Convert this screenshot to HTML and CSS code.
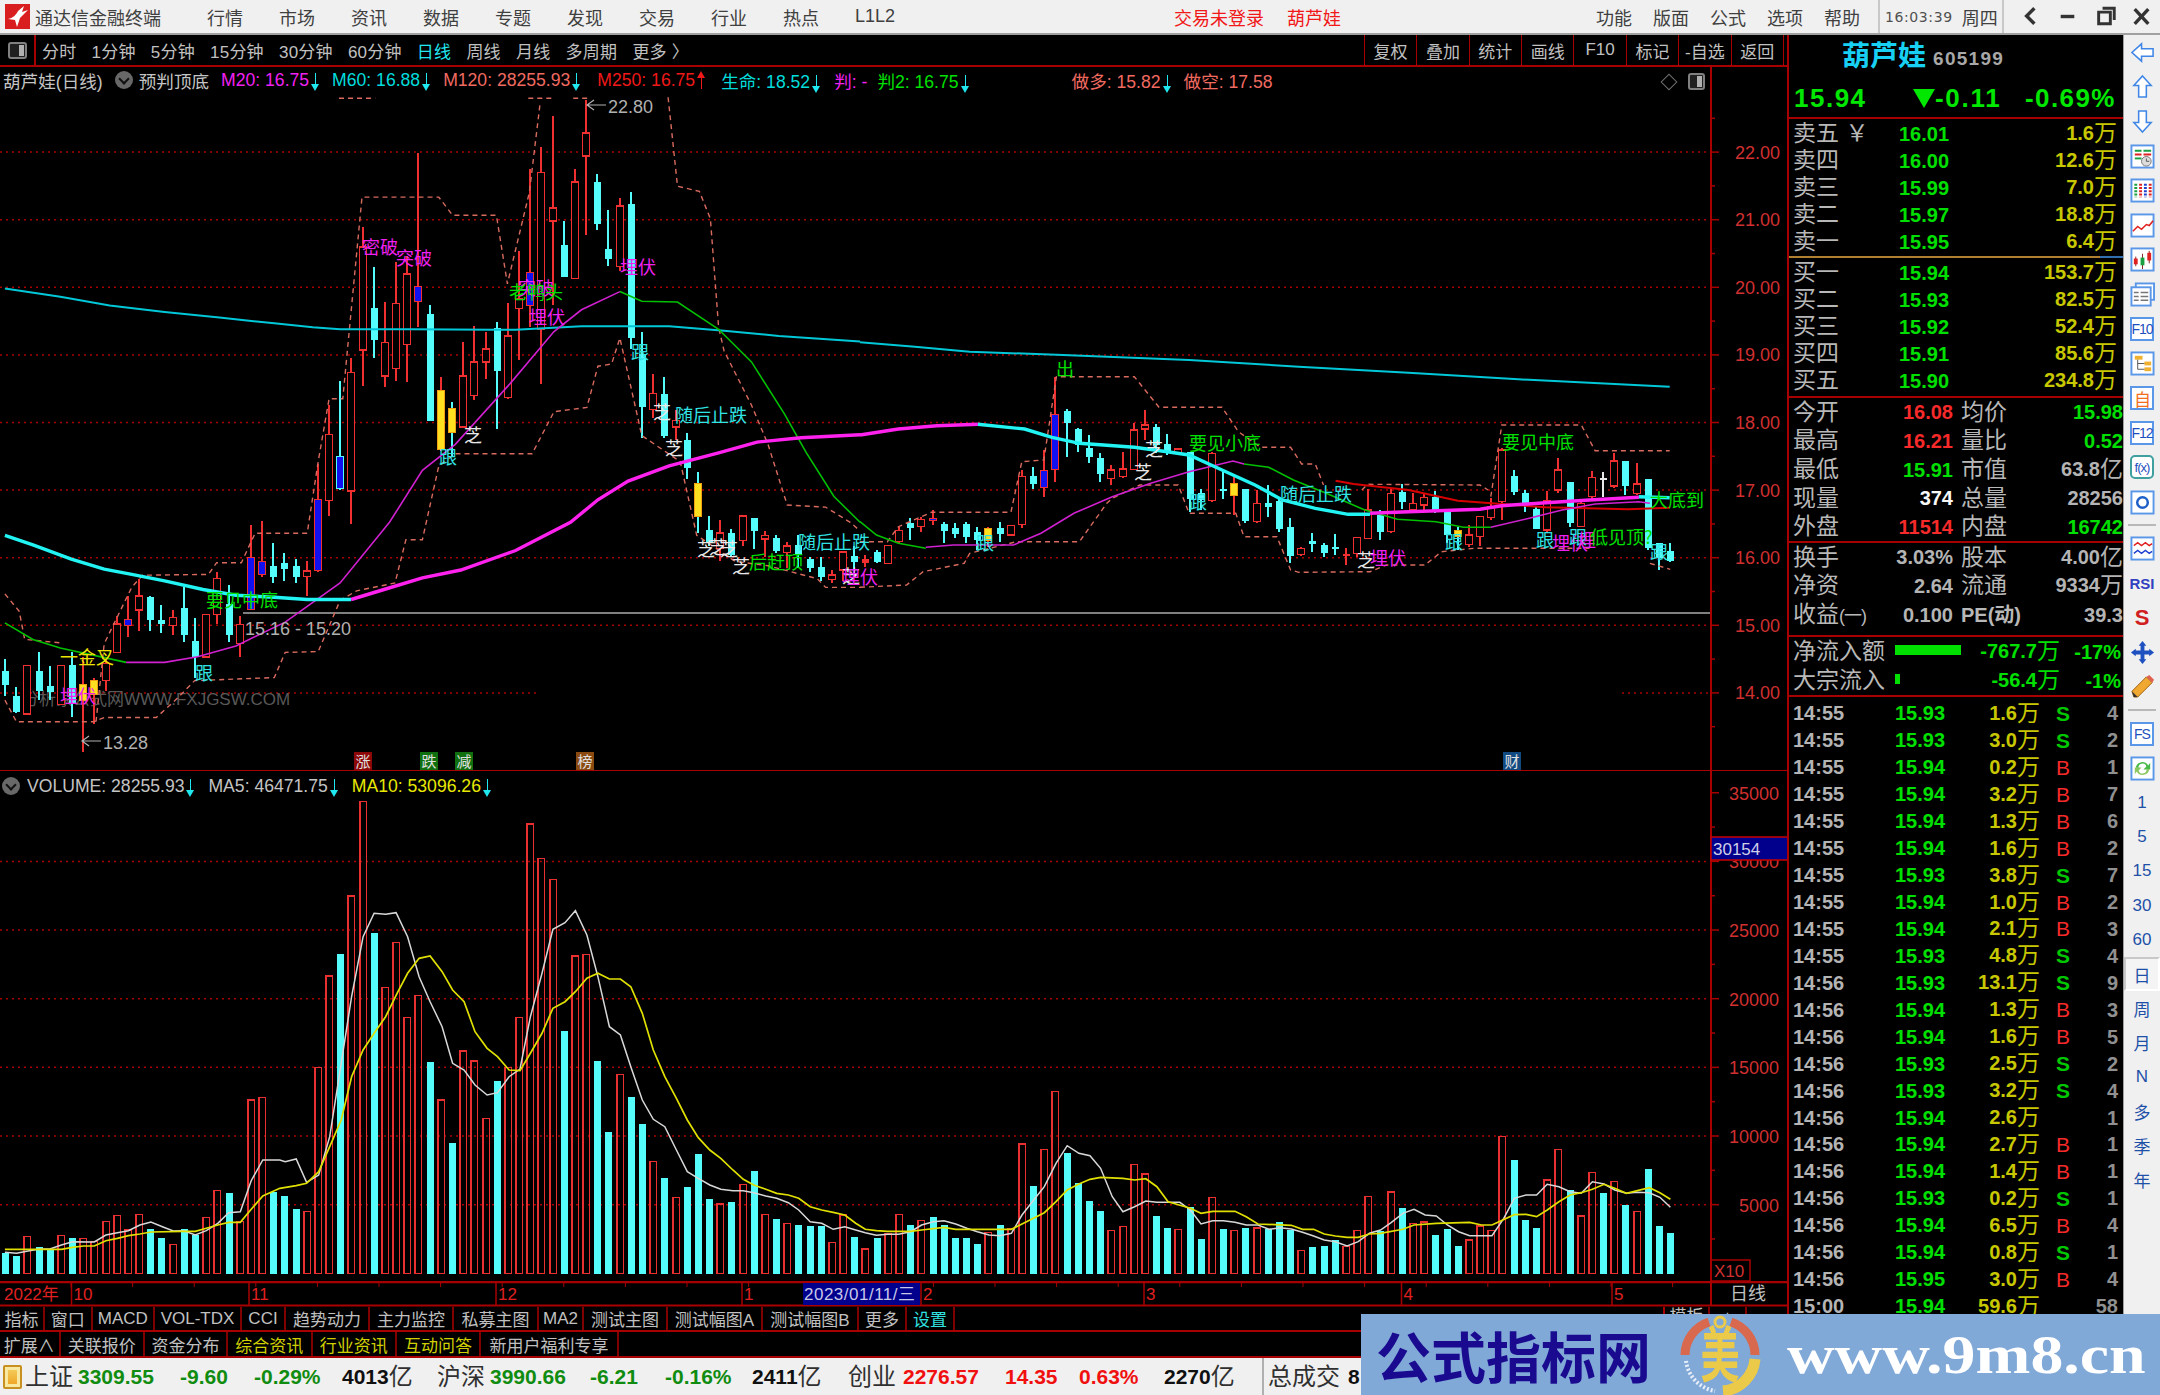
FILE: index.html
```html
<!DOCTYPE html>
<html lang="zh">
<head>
<meta charset="utf-8">
<title>通达信金融终端</title>
<link rel="stylesheet" href="styles.css">
</head>
<body>
<div class="app">
  <header class="titlebar">
    <svg class="logo" viewBox="0 0 25 25"><rect width="25" height="25" fill="#d81e1e"/><path d="M3 15 C8 14 11 11 13 7 L19 2 L17 8 L23 6 L15 14 L12 23 L10 16 Z" fill="#fff"/></svg>
    <span class="appname">通达信金融终端</span>
    <nav class="menu"><span>行情</span><span>市场</span><span>资讯</span><span>数据</span><span>专题</span><span>发现</span><span>交易</span><span>行业</span><span>热点</span><span>L1L2</span></nav>
    <span class="notice first">交易未登录</span><span class="notice second">葫芦娃</span>
    <nav class="menu menu-r"><span>功能</span><span>版面</span><span>公式</span><span>选项</span><span>帮助</span></nav>
    <div class="clock"><span class="time">16:03:39</span><span>周四</span></div>
    <div class="winctl">
      <svg viewBox="0 0 38 33"><path d="M23 8 L15 16 L23 24" fill="none" stroke="#333" stroke-width="3.5"/></svg>
      <svg viewBox="0 0 38 33"><path d="M12 16.5 H26" stroke="#333" stroke-width="3.5"/></svg>
      <svg viewBox="0 0 38 33"><path d="M13 12 H25 V24 H13 Z M17 8 H29 V20" fill="none" stroke="#333" stroke-width="3"/></svg>
      <svg viewBox="0 0 38 33"><path d="M12 9 L26 24 M26 9 L12 24" stroke="#333" stroke-width="3.5"/></svg>
    </div>
  </header>

  <div class="workspace">
    <main class="leftcol">
      <div class="toolbar">
        <div class="tb-icon"><i class="winbtn"></i></div>
        <div class="periods"><span>分时</span><span>1分钟</span><span>5分钟</span><span>15分钟</span><span>30分钟</span><span>60分钟</span><span class="on">日线</span><span>周线</span><span>月线</span><span>多周期</span><span>更多 〉</span></div>
        <div class="tools"><span>复权</span><span>叠加</span><span>统计</span><span>画线</span><span>F10</span><span>标记</span><span>-自选</span><span>返回</span></div>
      </div>
      <section class="panel panel-main">
        <svg id="main" class="chart" viewBox="0 67 1787 704" width="1787" height="704"></svg>
        <div class="legend">
          <span class="t">葫芦娃(日线)</span><i class="chev"></i><span class="t tight">预判顶底</span>
          <span class="mg">M20: 16.75<i class="dn"></i></span>
          <span class="cy">M60: 16.88<i class="dn"></i></span>
          <span class="sa">M120: 28255.93<i class="dn"></i></span>
          <span class="rd sp4">M250: 16.75<i class="up"></i></span>
          <span class="cy sp3">生命: 18.52<i class="dn"></i></span>
          <span class="mg sp1">判: -</span>
          <span class="gr spn">判2: 16.75<i class="dn"></i></span>
          <span class="sa far">做多: 15.82<i class="dn"></i></span>
          <span class="sa">做空: 17.58</span>
        </div>
        <div class="corner"><span class="diamond"></span><i class="winbtn small"></i></div>
      </section>
      <section class="panel panel-vol">
        <svg id="vol" class="chart" viewBox="0 771 1787 510" width="1787" height="510"></svg>
        <div class="legend legend-vol">
          <i class="chev"></i>
          <span class="t">VOLUME: 28255.93<i class="dn"></i></span>
          <span class="t">MA5: 46471.75<i class="dn"></i></span>
          <span class="ye">MA10: 53096.26<i class="dn"></i></span>
        </div>
      </section>
      <svg id="dates" class="chart" viewBox="0 1281 1787 26" width="1787" height="26"></svg>
      <div class="tabs tabs-1">
        <span>指标</span><span>窗口</span><span>MACD</span><span>VOL-TDX</span><span>CCI</span><span>趋势动力</span><span>主力监控</span><span>私募主图</span><span>MA2</span><span>测试主图</span><span>测试幅图A</span><span>测试幅图B</span><span>更多</span><span class="cyan">设置</span><span class="gapcell"></span><span class="mini">模板</span><span class="mini">+</span>
      </div>
      <div class="tabs tabs-2">
        <span>扩展∧</span><span>关联报价</span><span>资金分布</span><span class="yellow">综合资讯</span><span class="yellow">行业资讯</span><span class="yellow">互动问答</span><span>新用户福利专享</span>
      </div>
    </main>

    <aside class="quote">
      <div class="q-head">
        <div class="q-name"><span class="stock">葫芦娃</span><span class="code">605199</span></div>
        <div class="q-price"><span class="now">15.94</span><span class="tri"></span><span class="chg">-0.11</span><span class="pct">-0.69%</span></div>
      </div>
      <div class="book" id="sell"></div>
      <div class="mid"></div>
      <div class="book" id="buy"></div>
      <div class="q-info stats">
        <div class="r5"><b class="l">今开</b><em class="red">16.08</em><b class="l">均价</b><em class="green">15.98</em></div>
        <div class="r5"><b class="l">最高</b><em class="red">16.21</em><b class="l">量比</b><em class="green">0.52</em></div>
        <div class="r5"><b class="l">最低</b><em class="green">15.91</em><b class="l">市值</b><em class="gray">63.8<u>亿</u></em></div>
        <div class="r5"><b class="l">现量</b><em class="white">374</em><b class="l">总量</b><em class="gray">28256</em></div>
        <div class="r5"><b class="l">外盘</b><em class="red">11514</em><b class="l">内盘</b><em class="green">16742</em></div>
      </div>
      <div class="q-info fund">
        <div class="r5"><b class="l">换手</b><em class="gray">3.03%</em><b class="l">股本</b><em class="gray">4.00<u>亿</u></em></div>
        <div class="r5"><b class="l">净资</b><em class="gray">2.64</em><b class="l">流通</b><em class="gray">9334<u>万</u></em></div>
        <div class="r5"><b class="l">收益<i class="sm">(一)</i></b><em class="gray">0.100</em><b class="l pe">PE(动)</b><em class="gray">39.3</em></div>
      </div>
      <div class="flow">
        <div class="f-row"><b class="l">净流入额</b><span class="fbar"><i class="long"></i></span><em class="green">-767.7<u>万</u></em><em class="green">-17%</em></div>
        <div class="f-row"><b class="l">大宗流入</b><span class="fbar"><i class="short"></i></span><em class="green">-56.4<u>万</u></em><em class="green">-1%</em></div>
      </div>
      <div class="trades" id="trades"></div>
    </aside>

    <aside class="sidetools">
      <span class="si"><svg viewBox="0 0 26 26"><path d="M2 13 L12 4 V9 H24 V17 H12 V22 Z" fill="#fff" stroke="#3f86e6" stroke-width="1.6"/></svg></span>
      <span class="si"><svg viewBox="0 0 26 26"><path d="M13 2 L22 12 H17 V24 H9 V12 H4 Z" fill="#fff" stroke="#3f86e6" stroke-width="1.6"/></svg></span>
      <span class="si"><svg viewBox="0 0 26 26"><path d="M13 24 L22 14 H17 V2 H9 V14 H4 Z" fill="#fff" stroke="#3f86e6" stroke-width="1.6"/></svg></span>
      <span class="si"><svg viewBox="0 0 26 26"><rect x="1.5" y="1.5" width="23" height="23" fill="#fff" stroke="#5b97e8" stroke-width="2"/><path d="M5 7H12M14 7H22" stroke="#19a040" stroke-width="2"/><path d="M5 11H12M14 11H22" stroke="#e02020" stroke-width="2"/><path d="M5 15H12" stroke="#19a040" stroke-width="2"/><circle cx="17" cy="18" r="5" fill="#ddd" stroke="#777"/><path d="M17 15V18H20" stroke="#555" fill="none"/></svg></span>
      <span class="si"><svg viewBox="0 0 26 26"><rect x="1.5" y="1.5" width="23" height="23" fill="#fff" stroke="#5b97e8" stroke-width="2"/><path d="M6 6V20" stroke="#19a040" stroke-width="3" stroke-dasharray="2 1.4"/><path d="M11 6V20" stroke="#e02020" stroke-width="3" stroke-dasharray="2 1.4"/><path d="M16 6V20" stroke="#2040d0" stroke-width="3" stroke-dasharray="2 1.4"/><path d="M21 6V20" stroke="#e02020" stroke-width="3" stroke-dasharray="2 1.4"/></svg></span>
      <span class="si"><svg viewBox="0 0 26 26"><rect x="1.5" y="1.5" width="23" height="23" fill="#fff" stroke="#5b97e8" stroke-width="2"/><path d="M3 19 L8 14 L12 17 L17 12 L20 13 L24 8" fill="none" stroke="#e02020" stroke-width="1.6"/></svg></span>
      <span class="si"><svg viewBox="0 0 26 26"><rect x="1.5" y="1.5" width="23" height="23" fill="#fff" stroke="#5b97e8" stroke-width="2"/><path d="M6 10V20M13 7V23M20 4V17" stroke="#802020"/><rect x="4" y="12" width="4" height="6" fill="#e02020"/><rect x="11" y="11" width="4" height="8" fill="#19a040"/><rect x="18" y="6" width="4" height="8" fill="#e02020"/></svg></span>
      <span class="si"><svg viewBox="0 0 26 26"><rect x="6" y="1.5" width="19" height="17" fill="#fff" stroke="#5b97e8" stroke-width="2"/><rect x="1.5" y="5.5" width="20" height="19" fill="#fff" stroke="#5b97e8" stroke-width="2"/><path d="M4 11H9M11 11H19M4 15H9M11 15H19M4 19H9M11 19H19" stroke="#777" stroke-width="1.6"/></svg></span>
      <span class="si"><span class="fk">F10</span></span>
      <span class="si"><svg viewBox="0 0 26 26"><rect x="1.5" y="1.5" width="23" height="23" fill="#fff" stroke="#5b97e8" stroke-width="2"/><rect x="5" y="5" width="8" height="4" fill="#f0b030"/><rect x="15" y="11" width="7" height="4" fill="#f0b030"/><rect x="15" y="17" width="7" height="4" fill="#f0b030"/><path d="M8 9V19H15M8 13H15" fill="none" stroke="#555"/></svg></span>
      <span class="si"><span class="fk zi">自</span></span>
      <span class="si"><span class="fk">F12</span></span>
      <span class="si"><span class="fk fx">f(x)</span></span>
      <span class="si"><svg viewBox="0 0 26 26"><rect x="1.5" y="1.5" width="23" height="23" fill="#fff" stroke="#5b97e8" stroke-width="2"/><circle cx="13" cy="13" r="5.5" fill="none" stroke="#1e60c8" stroke-width="2.6"/></svg></span>
      <span class="sep"></span>
      <span class="si"><svg viewBox="0 0 26 26"><rect x="1.5" y="1.5" width="23" height="23" fill="#fff" stroke="#5b97e8" stroke-width="2"/><path d="M4 10 L8 7 L12 10 L16 7 L20 10 L23 8" fill="none" stroke="#e02020" stroke-width="1.5"/><path d="M4 18 L8 15 L12 18 L16 15 L20 18 L23 16" fill="none" stroke="#2040d0" stroke-width="1.5"/></svg></span>
      <span class="si"><span class="rsi">RSI</span></span>
      <span class="si"><span class="sred">S</span></span>
      <span class="si"><svg viewBox="0 0 26 26"><path d="M13 1 L17 6 H15 V11 H20 V9 L25 13 L20 17 V15 H15 V20 H17 L13 25 L9 20 H11 V15 H6 V17 L1 13 L6 9 V11 H11 V6 H9 Z" fill="#1e50c0"/></svg></span>
      <span class="si"><svg viewBox="0 0 26 26"><path d="M4 24 L2 18 L17 3 L23 9 L8 24 Z" fill="#f0a830" stroke="#a06010"/><path d="M17 3 L20 1 L25 6 L23 9 Z" fill="#e06050"/><path d="M4 24 L2 18 L8 24 Z" fill="#333"/></svg></span>
      <span class="sep"></span>
      <span class="si"><span class="fk">FS</span></span>
      <span class="si"><svg viewBox="0 0 26 26"><rect x="1.5" y="1.5" width="23" height="23" fill="#fff" stroke="#5b97e8" stroke-width="2"/><path d="M6 12 A7 7 0 0 1 19 10 L21 7 V14 H14 L17 11 A4 4 0 0 0 9 13 Z" fill="#48b848"/><path d="M20 14 A7 7 0 0 1 7 16 L5 19 V12 H12 L9 15 A4 4 0 0 0 17 13 Z" fill="#8cc860"/></svg></span>
      <span class="sn">1</span><span class="sn">5</span><span class="sn">15</span><span class="sn">30</span><span class="sn">60</span>
      <span class="sn cur">日</span><span class="sn">周</span><span class="sn">月</span><span class="sn">N</span><span class="sn">多</span><span class="sn">季</span><span class="sn">年</span>
    </aside>
  </div>

  <footer class="status">
    <i class="gold"></i>
    <span class="n">上证</span><b class="up-g">3309.55</b><b class="up-g">-9.60</b><b class="up-g">-0.29%</b><span class="amt">4013<u>亿</u></span>
    <span class="n">沪深</span><b class="up-g">3990.66</b><b class="up-g">-6.21</b><b class="up-g">-0.16%</b><span class="amt">2411<u>亿</u></span>
    <span class="n">创业</span><b class="up-r">2276.57</b><b class="up-r">14.35</b><b class="up-r">0.63%</b><span class="amt">2270<u>亿</u></span>
    <i class="vsep"></i><span class="n">总成交</span><span class="amt">8</span>
  </footer>

  <div class="watermark">
    <span class="wm-cn">公式指标网</span>
    <svg class="wm-logo" viewBox="0 0 82 80">
      <path d="M6 40 A35 35 0 0 1 30 7" fill="none" stroke="#d8694e" stroke-width="9"/>
      <path d="M52 7 A35 35 0 0 1 76 40" fill="none" stroke="#d8694e" stroke-width="9"/>
      <path d="M76 44 A35 35 0 0 1 44 76" fill="none" stroke="#eaca48" stroke-width="11"/>
      <path d="M7 46 A35 35 0 0 0 36 76" fill="none" stroke="#e8eef8" stroke-width="4" stroke-dasharray="2 2"/>
      <text class="wm-glyph" transform="translate(41 62) scale(.85 1.32)" text-anchor="middle">美</text>
      <circle cx="41" cy="7" r="5" fill="none" stroke="#eaca48" stroke-width="3"/>
    </svg>
    <span class="wm-url">www.9m8.cn</span>
  </div>
</div>
<script src="app.js"></script>
</body>
</html>
```
FILE: styles.css
```css
* { box-sizing: border-box; }
html, body { margin: 0; padding: 0; background: #000; }
body { width: 2160px; height: 1395px; overflow: hidden; font-family: "Liberation Sans", "Noto Sans CJK SC", sans-serif; }
i, em, u, b { font-style: normal; text-decoration: none; }
.app { position: relative; width: 2160px; height: 1395px; overflow: hidden; display: flex; flex-direction: column; }

/* title bar */
.titlebar { height: 35px; flex: none; background: #f0f0f0; border-bottom: 2px solid #a0a0a0; display: flex; align-items: center; color: #404040; font-size: 18px; }
.logo { width: 25px; height: 25px; margin-left: 5px; flex: none; }
.appname { margin-left: 5px; width: 126px; white-space: nowrap; }
.menu { display: flex; gap: 36px; margin-left: 46px; align-items: center; }
.menu span { white-space: nowrap; min-width: 36px; }
.notice { color: #f01818; white-space: nowrap; }
.notice.first { margin-left: 279px; }
.notice.second { margin-left: 23px; }
.menu-r { margin-left: auto; gap: 21px; }
.clock { margin-left: 18px; padding-left: 5px; width: 126px; height: 33px; display: flex; align-items: center; gap: 9px; border-left: 2px solid #c8c8c8; border-right: 2px solid #c8c8c8; }
.time { font-family: "DejaVu Sans", sans-serif; font-size: 14px; letter-spacing: .6px; color: #505050; }
.winctl { display: flex; width: 156px; padding-left: 8px; }
.winctl svg { width: 38px; height: 33px; }

/* workspace */
.workspace { flex: none; height: 1323px; display: flex; background: #000; }
.leftcol { width: 1787px; flex: none; display: flex; flex-direction: column; }
.toolbar { height: 32px; flex: none; border-bottom: 2px solid #a80000; display: flex; align-items: center; font-size: 17px; color: #c0c0c0; }
.tb-icon { width: 36px; height: 30px; border-right: 2px solid #a80000; display: flex; align-items: center; justify-content: center; }
.winbtn { display: block; width: 19px; height: 17px; border: 2px solid #808080; border-radius: 3px; position: relative; background: #202020; }
.winbtn::after { content: ""; position: absolute; right: 1px; top: 1px; bottom: 1px; width: 5px; background: #b0b0b0; }
.winbtn.small { width: 17px; height: 17px; }
.periods { display: flex; gap: 15.2px; margin-left: 6px; white-space: nowrap; }
.periods span { letter-spacing: .2px; }
.periods .on { color: #20e8f0; }
.tools { margin-left: auto; margin-right: 3px; display: flex; height: 30px; border-left: 1px solid #a80000; }
.tools span { width: 52.4px; display: flex; align-items: center; justify-content: center; border-right: 1px solid #a80000; white-space: nowrap; }

.panel { position: relative; flex: none; }
.panel-main { height: 704px; }
.panel-vol { height: 510px; }
.chart { display: block; flex: none; }
.legend { position: absolute; left: 3px; top: 1px; height: 24px; display: flex; align-items: center; gap: 12px; font-size: 17.6px; white-space: nowrap; }
.legend-vol { left: 2px; top: 3px; gap: 13px; }
.legend-vol .chev { margin-right: -6px; }
.legend .t { color: #c4c4c4; }
.legend .tight { margin-left: -6px; margin-right: 0; }
.mg { color: #f020f0; } .cy { color: #00dcdc; } .sa { color: #f06a60; } .rd { color: #f01818; } .gr { color: #00e000; } .ye { color: #e8e800; }
.sp4 { margin-left: 4px; } .sp3 { margin-left: 3px; } .sp1 { margin-left: 1px; } .spn { margin-left: -2px; }
.far { margin-left: 90px; }
.chev { display: block; width: 18px; height: 18px; border-radius: 50%; background: #686868; position: relative; }
.chev::after { content: ""; position: absolute; left: 5px; top: 4px; width: 6px; height: 6px; border-right: 2px solid #111; border-bottom: 2px solid #111; transform: rotate(45deg); }
.dn, .up { display: inline-block; position: relative; width: 9px; height: 20px; margin-left: 2px; vertical-align: -5px; }
.dn::before, .up::before { content: ""; position: absolute; left: 4px; top: 2px; bottom: 2px; width: 1px; background: currentColor; }
.dn { color: #20e8f0; } .up { color: #f01818; }
.dn::after { content: ""; position: absolute; left: 0; bottom: 0; border-left: 4.5px solid transparent; border-right: 4.5px solid transparent; border-top: 7px solid #20e8f0; }
.up::after { content: ""; position: absolute; left: 0; top: 0; border-left: 4.5px solid transparent; border-right: 4.5px solid transparent; border-bottom: 7px solid #f01818; }
.corner { position: absolute; left: 1663px; top: 6px; display: flex; align-items: center; gap: 13px; }
.diamond { display: block; width: 12px; height: 12px; border: 1px solid #707070; transform: rotate(45deg); }

.lb { font-size: 18px; font-family: "Noto Sans CJK SC", sans-serif; }
.lb.m { fill: #f020f0; } .lb.g { fill: #00e000; } .lb.c { fill: #30e4e4; } .lb.w { fill: #e8e8e8; } .lb.y { fill: #ece400; }
.axlb { font-size: 18px; fill: #d03030; }
.note { font-size: 18px; fill: #b0b0b0; }
.fxjg { font-size: 17px; fill: #585858; }
.tag { font-size: 15px; fill: #e0e0e0; font-family: "Noto Sans CJK SC", sans-serif; }
.dt { font-size: 17px; fill: #e02020; }
.dtcur { font-size: 17px; fill: #c8c8e8; letter-spacing: .5px; }
.gl { font-size: 18px; fill: #c0c0c0; font-family: "Noto Sans CJK SC", sans-serif; }
.boxtxt { font-size: 17px; fill: #d0d0e8; }
.x10 { font-size: 17px; fill: #d03030; }

/* tabs */
.tabs { flex: none; display: grid; font-size: 17px; color: #c0c0c0; border-bottom: 2px solid #a80000; }
.tabs span { display: flex; align-items: center; justify-content: center; border-right: 2px solid #800000; white-space: nowrap; overflow: hidden; }
.tabs-1 { height: 25px; grid-template-columns: 45px 47.5px 62.5px 87px 44px 84px 84px 85px 45px 84px 95px 96px 48px 48px 710px 45px 37px; border-bottom: 2px solid #a80000; }
.tabs-2 { height: 26px; grid-template-columns: 60.5px 84.5px 83px 84.5px 84.5px 84px 138px; }
.tabs .cyan { color: #30e0e0; } .tabs .yellow { color: #d0d000; }
.tabs .gapcell { border-right: 2px solid #a80000; }
.tabs .mini { align-items: flex-start; line-height: 20px; }

/* quote panel */
.quote { width: 336px; flex: none; border-left: 2px solid #a80000; color: #c0c0c0; display: flex; flex-direction: column; overflow: hidden; line-height: 1; }
.q-head { height: 84px; flex: none; border-bottom: 2px solid #a80000; }
.q-name { height: 44px; display: flex; align-items: center; padding-left: 53px; gap: 7px; }
.stock { font-size: 28px; font-weight: 700; color: #18d0f4; white-space: nowrap; }
.code { font-size: 19px; font-weight: 700; color: #a8a8a8; letter-spacing: 1.3px; padding-top: 2px; }
.q-price { height: 38px; position: relative; display: flex; align-items: center; font-size: 26px; font-weight: 700; color: #00e800; padding-left: 5px; }
.now { width: 119px; letter-spacing: 1.5px; }
.tri { width: 0; height: 0; border-left: 11px solid transparent; border-right: 11px solid transparent; border-top: 19px solid #00e800; }
.chg { width: 90px; letter-spacing: 1.7px; }
.pct { letter-spacing: 1.4px; }
.book { height: 137px; flex: none; padding-left: 4px; }
#sell { padding-top: 1px; }
#buy { padding-top: 1px; }
.book-row { height: 27.1px; display: grid; grid-template-columns: 106px 100px 118px; align-items: center; }
.book-row .l, .l { font-weight: 400; font-size: 23px; color: #b8b8b8; white-space: nowrap; line-height: 1; }
.book-row .p { font-size: 20px; font-weight: 700; color: #00e000; }
.book-row .v { font-size: 20px; font-weight: 700; color: #c8c800; text-align: right; white-space: nowrap; }
u { font-size: 23px; font-weight: 400; line-height: 1; vertical-align: -1px; }
.sm { font-size: 18px; letter-spacing: -1px; }
.mid { height: 2px; flex: none; background: linear-gradient(90deg, #b08030 0 311px, #3070b0 311px); }
.q-info { flex: none; border-top: 2px solid #a80000; padding-left: 4px; }
.stats { margin-top: 1px; height: 145px; }
.fund { height: 94px; }
.r5 { height: 28.65px; display: grid; grid-template-columns: 160px 8px 70px 92px; align-items: center; }
.r5 .l:first-child { grid-column: 1; grid-row: 1; }
.r5 em { font-size: 20px; font-weight: 700; text-align: right; white-space: nowrap; }
.r5 em:nth-child(2) { grid-column: 1; grid-row: 1; }
.r5 .l:nth-child(3) { grid-column: 3; grid-row: 1; }
.r5 em:nth-child(4) { grid-column: 3 / 5; grid-row: 1; }
.pe { font-size: 20px !important; font-weight: 700 !important; }
.red { color: #f62a2a; } .green { color: #00e000; } .gray { color: #b4b4b4; } .white { color: #f8f8f8; }
.flow { flex: none; height: 62px; border-top: 2px solid #a80000; border-bottom: 2px solid #a80000; padding-left: 4px; }
.f-row { position: relative; height: 29px; display: grid; grid-template-columns: 102px 130px 35px 61px; align-items: center; }
.f-row em { font-size: 20px; font-weight: 700; text-align: right; white-space: nowrap; }
.f-row em:nth-of-type(1) { grid-column: 2 / 4; }
.f-row .fbar { display: block; position: absolute; left: 102px; top: 8px; height: 10px; }
.fbar i { display: block; height: 10px; background: #00e000; }
.fbar .long { width: 66px; } .fbar .short { width: 5px; }
.trades { flex: 1; padding: 3px 0 0 4px; overflow: hidden; }
.tr { height: 26.95px; display: grid; grid-template-columns: 102px 80px 65px 46px 32px; align-items: center; font-size: 20px; font-weight: 700; }
.tr .tm { color: #b4b4b4; } .tr .p { color: #00e000; } .tr .v { color: #c8c800; text-align: right; white-space: nowrap; }
.tr .f { text-align: center; font-weight: 400; font-size: 21px; } .tr .n { color: #909090; text-align: right; }
.tr .b { color: #f62a2a; } .tr .s { color: #00c800; font-weight: 700; }

/* side toolbar */
.sidetools { flex: 1; background: #f0f0f0; border-left: 1px solid #a0a0a0; display: flex; flex-direction: column; align-items: center; padding-top: 0; }
.si { height: 34.6px; width: 100%; flex: none; display: flex; align-items: center; justify-content: center; }
.si svg { width: 25px; height: 25px; }
.sep { flex: none; width: 28px; height: 2px; background: #b8b8b8; margin: 5px 0; }
.fk { width: 24px; height: 24px; border: 2px solid #5b97e8; background: #fff; color: #1e50c0; font-size: 14px; display: flex; align-items: center; justify-content: center; letter-spacing: -1px; }
.fk.zi { color: #f07020; font-size: 17px; }
.fk.fx { color: #1e50c0; border-color: #40a0a0; border-radius: 5px; font-size: 13px; }
.rsi { font-size: 15px; font-weight: 700; color: #3040c0; }
.sred { font-size: 22px; font-weight: 700; color: #d02020; }
.sn { flex: none; height: 34.3px; width: 100%; display: flex; align-items: center; justify-content: center; font-size: 17px; color: #1e50a8; }
.sn.cur { border: 2px solid #fff; border-top-color: #c8c8c8; border-left-color: #c8c8c8; background: #f4f4f4; }

/* status bar */
.status { flex: 1; background: #f0f0f0; display: grid; grid-template-columns: 22px 53px 102px 74px 88px 95px 53px 100px 75px 87px 96px 55px 102px 74px 85px 98px 6px 80px 40px; padding-left: 3px; align-items: center; font-size: 24px; color: #303030; line-height: 1; }
.gold { display: block; width: 19px; height: 24px; border: 2px solid #c89020; background: linear-gradient(#f4d060, #f0a020); box-shadow: inset 0 0 0 3px #f8e8a0; border-radius: 2px; }
.status b { font-size: 21px; font-weight: 700; }
.up-g { color: #108c10; } .up-r { color: #f01010; }
.amt { font-size: 21px; font-weight: 700; color: #101010; white-space: nowrap; }
.amt u { font-size: 24px; color: #303030; }
.n { white-space: nowrap; }
.vsep { display: block; width: 2px; height: 37px; background: #b0b0b0; }

/* watermark */
.watermark { position: absolute; left: 1361px; top: 1314px; width: 799px; height: 81px; background: #80a9d8; display: flex; align-items: center; }
.wm-cn { margin-left: 15px; font-size: 55px; font-weight: 700; color: #190a90; white-space: nowrap; font-family: "Noto Sans CJK SC", sans-serif; line-height: 1; width: 275px; }
.wm-logo { width: 82px; height: 80px; margin-left: 28px; flex: none; }
.wm-glyph { font-size: 46px; font-weight: 700; fill: #eaca48; font-family: "Noto Sans CJK SC", sans-serif; }
.wm-url { margin-left: 26px; font-family: "Liberation Serif", serif; font-weight: 700; font-size: 54px; color: #fff; white-space: nowrap; transform: scaleX(1.22); transform-origin: left center; }
```
FILE: app.js
```js
const NS = 'http://www.w3.org/2000/svg';
function add(p, tag, attrs, txt) {
  const e = document.createElementNS(NS, tag);
  for (const k in attrs) e.setAttribute(k, attrs[k]);
  if (txt != null) e.textContent = txt;
  p.appendChild(e);
  return e;
}
const main = document.getElementById('main');
const vol = document.getElementById('vol');
const dates = document.getElementById('dates');
const cx = i => 5 + i * 11.175;
const RED = '#f03030', CY = '#54fcfc', DK = '#a80000';
const z7 = a => a.map(p => [p[0] / 1.823, 80 + p[1] / 2.306]);
const z8 = a => a.map(p => [860 + p[0] / 1.823, 330 + p[1] / 3]);
const z9 = a => a.map(p => [p[0] / 1.823, 770 + p[1] / 3]);
const z10 = a => a.map(p => [860 + p[0] / 1.704, 770 + p[1] / 3]);
function line(svg, pts, stroke, w, dash) {
  const a = { points: pts.map(p => p[0].toFixed(1) + ',' + p[1].toFixed(1)).join(' '), fill: 'none', stroke: stroke, 'stroke-width': w };
  if (dash) a['stroke-dasharray'] = dash;
  add(svg, 'polyline', a);
}

/* main grid */
const py = p => 557.7 - (p - 16) * 67.6;
[22, 21, 20, 19, 18, 17, 16, 15].forEach(p => add(main, 'line', { x1: 0, x2: 1711, y1: py(p), y2: py(p), stroke: DK, 'stroke-width': 1.5, 'stroke-dasharray': '2 4' }));
add(main, 'line', { x1: 0, x2: 537, y1: py(14), y2: py(14), stroke: DK, 'stroke-width': 1.5, 'stroke-dasharray': '2 4' });
add(main, 'line', { x1: 1622, x2: 1711, y1: py(14), y2: py(14), stroke: DK, 'stroke-width': 1.5, 'stroke-dasharray': '2 4' });
add(main, 'line', { x1: 243, x2: 1711, y1: 613, y2: 613, stroke: '#808080', 'stroke-width': 2 });
add(main, 'text', { class: 'fxjg', x: 22, y: 705 }, '分析家公式网WWW.FXJGSW.COM');

/* candles: type, wickTop, bodyTop, bodyBot, wickBot (r red, c cyan, b blue, y yellow+red wick, Y yellow+cyan wick, w white) */
const c7 = `c 1335 1362 1395 1420;c 1400 1420 1458 1460;r 1350 1350 1462 1462;c 1318 1362 1408 1430;c 1352 1397 1412 1430;r 1350 1350 1440 1440;c 1320 1350 1440 1470;y 1330 1395 1430 1550;y 1380 1385 1418 1485;r 1330 1345 1385 1410;r 1235 1255 1320 1320;b 1190 1243 1257 1285;r 1150 1190 1222 1270;c 1190 1193 1245 1270;c 1210 1245 1255 1275;r 1222 1240 1258 1280;c 1170 1217 1280 1295;c 1240 1293 1330 1380;r 1232 1232 1330 1330;r 1135 1150 1232 1255;c 1165 1208 1280 1295;r 1235 1256 1300 1330;b 1027 1102 1220 1222;b 1018 1110 1140 1145;c 1068 1120 1147 1160;c 1090 1114 1128 1155;c 1105 1120 1147 1160;r 1110 1132 1145 1190;b 885 968 1130 1135;r 750 817 970 1005;u 695 868 942 945;r 640 675 948 1025;r 340 385 623 705;c 432 525 600 640;r 512 605 682 708;r 420 515 665 695;r 405 447 610 697;b 168 477 510 570;c 518 540 787 787;y 685 715 852 855;Y 742 757 813 870;r 605 682 800 800;r 568 650 728 738;r 580 620 650 690;c 558 573 672 805;r 515 590 732 735;r 395 505 527 645;b 205 445 520 570;r 155 213 575 700;r 82 295 325 520;c 325 380 455 455;r 205 235 458 460;r 45 122 175 358;c 217 235 332 345;c 300 390 413 430;r 272 290 430 440;c 258 287 594 620;c 580 632 755 825;r 678 723 760 780;c 685 723 820 825;r 760 785 800 830;c 815 830 895 920;Y 905 930 1007 1045;c 1005 1037 1065 1075;r 1015 1045 1080 1110;c 1035 1045 1095 1100;r 1005 1005 1062 1075;c 1010 1010 1040 1082;r 1040 1050 1058 1100;c 1050 1055 1085 1090;r 1065 1075 1090 1125;c 1050 1072 1095 1125;c 1100 1105 1125 1135;c 1100 1122 1147 1155;r 1130 1142 1152 1160;r 1085 1088 1130 1155;c 1075 1098 1112 1145`.split(';');
const c8 = `R 675 688 698 710;c 660 667 695 700;r 647 647 700 700;r 590 602 635 640;c 565 580 595 630;r 560 568 590 605;b 540 565 570 585;c 575 582 602 640;c 580 595 612 625;c 575 582 620 640;c 590 605 630 660;y 590 595 630 650;c 575 595 612 635;r 587 587 615 615;r 420 440 583 595;c 410 437 463 478;b 360 420 472 500;b 140 253 417 455;c 238 243 278 382;c 295 297 345 367;c 315 355 382 400;c 368 383 431 455;r 405 420 445 465;r 365 417 440 445;r 280 300 418 420;r 240 285 297 330;c 282 290 345 370;c 312 343 367 375;r 355 357 369 375;c 365 365 508 545;c 478 490 510 540;r 365 370 512 515;c 425 478 482 508;y 440 460 495 555;c 478 478 573 580;r 480 520 575 578;c 465 520 530 560;c 505 513 598 605;c 563 590 678 700;r 650 655 673 677;c 608 632 642 665;c 640 645 670 680;c 613 650 657 675;R 655 672 678 705;r 622 622 670 680;r 478 540 625 628;c 540 555 605 630;r 478 490 605 610;c 462 485 517 538;r 490 520 538 540;r 490 502 525 540;c 482 500 545 548;c 540 543 615 640;Y 590 600 620 660;r 585 615 643 650;r 558 560 620 648;r 505 530 562 570;r 355 360 515 570;c 420 437 487 495;c 480 490 520 545;c 530 537 597 598;r 483 512 600 605;r 383 420 480 490;c 455 455 580 590;r 510 520 590 590;r 422 442 500 510;w 425 445 450 500;r 370 393 468 475;c 392 392 468 495;r 400 462 490 495;c 447 447 655 660;c 640 640 685 720;c 640 663 693 695`.split(';');
const conv7 = v => 80 + v / 2.306, conv8 = v => 330 + v / 3;
function candle(i, s, conv) {
  const p = s.split(' ');
  const t = p[0], wt = conv(+p[1]), bt = conv(+p[2]), bb = conv(+p[3]), wb = conv(+p[4]);
  const x = cx(i), xr = Math.round(x), w = 7;
  const col = { r: RED, R: RED, c: CY, b: RED, u: CY, y: RED, Y: CY, w: '#e8e8e8' }[t];
  add(main, 'line', { x1: xr, x2: xr, y1: wt, y2: wb, stroke: col, 'stroke-width': 1.5, 'shape-rendering': 'crispEdges' });
  const attrs = { x: xr - w / 2, y: bt, width: w, height: Math.max(bb - bt, 1.5), 'shape-rendering': 'crispEdges' };
  if (t === 'r') Object.assign(attrs, { fill: '#000', stroke: RED, 'stroke-width': 1.5 });
  else if (t === 'R') Object.assign(attrs, { fill: RED });
  else if (t === 'c') Object.assign(attrs, { fill: CY });
  else if (t === 'w') Object.assign(attrs, { fill: '#e8e8e8' });
  else if (t === 'b') Object.assign(attrs, { fill: '#1010f0', stroke: RED, 'stroke-width': 1 });
  else if (t === 'u') Object.assign(attrs, { fill: '#1010f0', stroke: CY, 'stroke-width': 1 });
  else Object.assign(attrs, { fill: '#ffe020', stroke: '#f0a010', 'stroke-width': 1 });
  add(main, 'rect', attrs);
}
c7.forEach((s, i) => candle(i, s, conv7));
c8.forEach((s, i) => candle(i + 77, s, conv8));

/* stop-loss dashes */
const DS = '#d86a5e';
const dash = (pts) => line(main, pts, DS, 1.4, '5 4');
dash(z7([[9, 1185], [35, 1225], [45, 1290], [110, 1298]]));
dash(z7([[9, 1430], [30, 1480], [170, 1480], [190, 1470], [285, 1470], [320, 1430], [355, 1385], [500, 1378], [520, 1320], [580, 1318], [620, 1200], [650, 1178], [720, 1160], [740, 1060], [770, 1060], [800, 890], [830, 862], [970, 862], [1010, 765], [1070, 755], [1090, 660], [1115, 655], [1130, 595], [1170, 820], [1240, 880], [1270, 1050], [1340, 1110], [1400, 1120], [1490, 1150], [1505, 1170], [1568, 1170]]));
dash(z7([[175, 1480], [190, 1300], [240, 1170], [260, 1142], [380, 1140], [395, 1113], [440, 1113], [465, 1045], [560, 1045], [580, 880], [600, 735], [625, 735], [660, 270], [800, 270], [825, 312], [905, 312], [925, 470], [965, 260], [985, 50]]));
dash(z7([[618, 42], [684, 42]])); dash(z7([[963, 42], [1008, 42]])); dash(z7([[1045, 42], [1075, 42]]));
dash(z7([[1218, 40], [1235, 245], [1275, 257], [1295, 320], [1310, 570], [1320, 625], [1370, 750], [1400, 840], [1435, 980], [1505, 985], [1550, 1020], [1568, 1040]]));
dash(z8([[0, 772], [85, 765], [115, 725], [190, 700], [200, 670], [285, 635], [400, 635], [450, 520], [460, 505], [510, 465], [580, 465], [600, 550], [685, 550], [700, 620], [760, 620], [785, 720], [800, 727], [930, 725], [960, 705], [1030, 705], [1060, 665], [1120, 655], [1250, 655], [1330, 655]]));
dash(z8([[1440, 700], [1477, 718]]));
dash(z8([[0, 635], [50, 635], [70, 590], [130, 547], [275, 547], [295, 395], [335, 390], [358, 140], [500, 140], [545, 232], [660, 232], [690, 305], [730, 352], [785, 352], [805, 402], [830, 402], [845, 465]]));
dash(z8([[915, 480], [925, 463], [1130, 465], [1145, 480]]));
dash(z8([[1150, 500], [1170, 285], [1315, 285], [1340, 362], [1476, 362]]));

/* averages */
line(main, z8([[867, 452], [900, 462], [1000, 480], [1090, 512], [1170, 522], [1250, 532], [1400, 538], [1476, 533]]), '#d80000', 2);
const LC = '#00c8d8', TC = '#22f4f4', TM = '#ff22ee', SM = '#d020d0', SG = '#00c000';
line(main, z7([[9, 481], [110, 500], [200, 520], [300, 535], [400, 548], [500, 561], [570, 570], [620, 575], [750, 575], [900, 576], [940, 576], [1060, 568], [1220, 568], [1320, 578], [1420, 590], [1568, 603]]), LC, 2);
line(main, z8([[0, 37], [100, 50], [200, 65], [370, 75], [600, 90], [800, 110], [1000, 128], [1200, 148], [1476, 170]]), LC, 2);
line(main, z7([[9, 1252], [60, 1290], [110, 1310], [230, 1343]]), SG, 1.6);
line(main, z7([[230, 1343], [300, 1343], [360, 1330], [430, 1305], [520, 1250], [620, 1160], [710, 1020], [770, 900], [830, 840], [930, 700], [1010, 580], [1060, 530], [1130, 488]]), SM, 1.6);
line(main, z7([[1130, 488], [1170, 510], [1235, 512], [1310, 575], [1370, 650], [1430, 770], [1470, 860], [1520, 960], [1568, 1020]]), SG, 1.6);
line(main, z8([[0, 575], [30, 615], [70, 640], [120, 655]]), SG, 1.6);
line(main, z8([[120, 652], [170, 645], [280, 645], [330, 610], [390, 550], [460, 500], [530, 460], [600, 425], [680, 393], [700, 402]]), SM, 1.6);
line(main, z8([[700, 402], [745, 412], [790, 450], [850, 490], [920, 540], [980, 568], [1050, 575], [1100, 592], [1150, 592]]), SG, 1.6);
line(main, z8([[1150, 592], [1220, 565], [1280, 540], [1340, 522], [1420, 515], [1440, 520]]), SM, 1.6);
line(main, z7([[9, 1050], [60, 1072], [130, 1105], [190, 1128], [240, 1140], [300, 1155], [370, 1175], [430, 1188], [500, 1193], [560, 1198], [640, 1198]]), TC, 3.4);
line(main, z7([[640, 1198], [700, 1175], [770, 1148], [840, 1130], [940, 1085], [1040, 1020], [1090, 968], [1145, 925], [1220, 890], [1310, 860], [1380, 835], [1460, 825], [1568, 818]]), TM, 3.4);
line(main, z8([[0, 315], [70, 297], [140, 287], [215, 283]]), TM, 3.4);
line(main, z8([[215, 283], [300, 297], [350, 322], [400, 340], [500, 352], [560, 365], [600, 375], [660, 420], [720, 465], [770, 510], [830, 535], [890, 553], [930, 553]]), TC, 3.4);
line(main, z8([[930, 550], [1000, 545], [1130, 538], [1170, 527], [1250, 518], [1330, 510], [1420, 502]]), TM, 3.4);
line(main, z8([[1420, 500], [1476, 503]]), TC, 3.4);

/* signal labels: text, x, centre y, colour */
[['跟', 195, 673, 'c'], ['一金叉', 60, 657, 'y'], ['埋伏', 60, 696, 'm'], ['要见中底', 206, 600, 'g'], ['密破', 362, 247, 'm'], ['突破', 396, 258, 'm'], ['突破', 518, 288, 'm'], ['老鸭头', 509, 292, 'g'], ['埋伏', 529, 317, 'm'], ['埋伏', 620, 267, 'm'], ['跟', 631, 352, 'c'], ['跟', 439, 457, 'c'], ['芝', 464, 435, 'w'], ['芝', 653, 412, 'w'], ['随后止跌', 675, 415, 'c'], ['芝', 665, 448, 'w'], ['芝', 697, 549, 'w'], ['芝', 709, 547, 'w'], ['芝', 720, 549, 'w'], ['芝', 732, 566, 'w'], ['后赶顶', 749, 562, 'g'], ['随后止跌', 798, 542, 'c'], ['芝', 842, 576, 'w'], ['埋伏', 842, 577, 'm'], ['出', 1056, 369, 'g'], ['要见小底', 1189, 443, 'g'], ['芝', 1145, 449, 'w'], ['芝', 1134, 472, 'w'], ['跟', 1189, 502, 'c'], ['跟', 976, 543, 'c'], ['随后止跌', 1280, 494, 'c'], ['芝', 1357, 560, 'w'], ['埋伏', 1370, 558, 'm'], ['跟', 1445, 542, 'c'], ['要见中底', 1502, 442, 'g'], ['跟', 1536, 540, 'c'], ['埋伏', 1552, 543, 'm'], ['跟', 1569, 537, 'c'], ['埋', 1578, 540, 'm'], ['低见顶?', 1590, 537, 'g'], ['大底到', 1650, 500, 'g'], ['跟', 1650, 552, 'c']].forEach(l => add(main, 'text', { class: 'lb ' + l[3], x: l[1], y: l[2] + 6.5 }, l[0]));
add(main, 'text', { class: 'note', x: 245, y: 635 }, '15.16 - 15.20');
add(main, 'text', { class: 'note', x: 608, y: 113 }, '22.80');
add(main, 'path', { d: 'M606 105 H588 M594 100 L587 105 L594 110', stroke: '#b0b0b0', fill: 'none', 'stroke-width': 1.2 });
add(main, 'text', { class: 'note', x: 103, y: 749 }, '13.28');
add(main, 'path', { d: 'M101 741 H83 M89 736 L82 741 L89 746', stroke: '#b0b0b0', fill: 'none', 'stroke-width': 1.2 });
[['涨', 354, '#8c0808'], ['跌', 420, '#107010'], ['减', 455, '#107010'], ['榜', 576, '#8a4a10'], ['财', 1503, '#104a80']].forEach(t => {
  add(main, 'rect', { x: t[1], y: 752, width: 18, height: 19, fill: t[2] });
  add(main, 'text', { class: 'tag', x: t[1] + 1.5, y: 767 }, t[0]);
});

/* main axis */
add(main, 'line', { x1: 1711, x2: 1711, y1: 67, y2: 771, stroke: DK, 'stroke-width': 2 });
[22, 21, 20, 19, 18, 17, 16, 15, 14].forEach(p => add(main, 'text', { class: 'axlb', x: 1780, y: py(p) + 6.5, 'text-anchor': 'end' }, p + '.00'));
for (let p = 13.5; p < 23; p += 0.5) {
  add(main, 'line', { x1: 1711, x2: p % 1 ? 1715 : 1719, y1: py(p), y2: py(p), stroke: DK, 'stroke-width': 1.5 });
}
add(main, 'line', { x1: 0, x2: 1787, y1: 771, y2: 771, stroke: DK, 'stroke-width': 2 });

/* volume */
const vy = v => 1273.3 - v * 0.01373;
[30000, 25000, 20000, 15000, 10000, 5000].forEach(v => add(vol, 'line', { x1: 0, x2: 1711, y1: vy(v), y2: vy(v), stroke: DK, 'stroke-width': 1.5, 'stroke-dasharray': '2 4' }));
const bars9 = 'c1450 c1458 r1400 c1432 c1438 r1396 c1405 r1405 r1415 r1355 r1337 r1380 r1333 c1378 c1405 r1423 c1378 c1395 r1342 r1262 c1270 r1355 r990 r982 c1265 c1278 c1318 r1324 r892 r618 c553 r378 r95 c490 r653 r518 r743 r677 c877 r990 c1120 r843 r873 r1045 c932 r892 r743 r162 r265 r328 c783 r558 r553 c873 c1085 r913 c980 c1062 r1175 c1224 r1283 c1252 c1152 c1287 r1302 c1296 r1243 c1202 r1333 c1346 r1360 c1364 c1368 c1368 r1418 r1335 c1400 r1437 c1404 r1390 r1333 c1364 r1352 c1342 c1365 c1405 c1405 c1422 r1388 c1364 r1375 r1122 c1247 r1139 r965 c1148 c1240 c1292 c1323 r1382 r1370 r1184 r1212 c1337 c1373 r1378 c1310 c1408 r1283 c1378 r1382 c1373 r1374 c1378 c1355 c1380 r1442 c1432 c1427 c1410 r1430 r1382 r1280 c1382 r1266 c1315 r1360 r1356 c1394 c1378 c1427 r1410 r1368 r1382 r1100 c1170 c1350 c1373 r1230 r1139 c1260 r1338 r1208 c1268 r1235 c1305 r1325 c1197 c1368 c1390'.split(' ');
bars9.forEach((s, i) => {
  const top = 770 + (+s.slice(1)) / 3, x = Math.round(cx(i)) - 3.5, h = 1273.5 - top;
  if (s[0] === 'r') add(vol, 'rect', { x: x + .5, y: top, width: 6.5, height: h, fill: 'none', stroke: '#e83030', 'stroke-width': 1.5, 'shape-rendering': 'crispEdges' });
  else add(vol, 'rect', { x: x, y: top, width: 7, height: h, fill: CY, 'shape-rendering': 'crispEdges' });
});
const ma5 = z9([[9, 1447], [30, 1450], [51, 1443], [72, 1437], [91, 1437], [112, 1425], [132, 1415], [172, 1416], [193, 1395], [214, 1388], [234, 1382], [255, 1365], [275, 1356], [296, 1370], [316, 1383], [335, 1382], [356, 1395], [376, 1382], [397, 1360], [417, 1328], [438, 1325], [458, 1232], [479, 1170], [510, 1170], [520, 1175], [540, 1167], [559, 1237], [581, 1215], [601, 1100], [622, 880], [641, 680], [662, 500], [682, 430], [703, 433], [722, 428], [743, 500], [764, 620], [784, 695], [806, 770], [825, 880], [846, 900], [866, 945], [888, 975], [907, 968], [928, 920], [948, 897], [967, 740], [988, 610], [1008, 478], [1030, 458], [1049, 422], [1070, 495], [1090, 620], [1111, 770], [1131, 795], [1150, 890], [1171, 990], [1191, 1048], [1212, 1070], [1233, 1140], [1253, 1205], [1273, 1225], [1294, 1245], [1314, 1258], [1336, 1262], [1355, 1262], [1374, 1268], [1396, 1278], [1416, 1285], [1437, 1298], [1456, 1320], [1477, 1355], [1498, 1360], [1519, 1378], [1540, 1370], [1560, 1380]]).concat(z10([[9, 1388], [28, 1396], [47, 1393], [66, 1393], [86, 1385], [105, 1365], [125, 1355], [143, 1352], [163, 1362], [182, 1375], [200, 1385], [220, 1395], [238, 1397], [258, 1390], [276, 1335], [296, 1290], [314, 1250], [334, 1180], [353, 1127], [373, 1150], [392, 1157], [410, 1195], [430, 1280], [448, 1325], [468, 1310], [487, 1293], [506, 1297], [545, 1297], [563, 1320], [581, 1362], [601, 1352], [619, 1352], [639, 1357], [658, 1365], [678, 1365], [697, 1378], [716, 1373], [735, 1377], [754, 1387], [773, 1398], [791, 1410], [810, 1415], [830, 1428], [849, 1415], [868, 1390], [887, 1380], [905, 1358], [925, 1330], [944, 1318], [963, 1335], [982, 1338], [1001, 1365], [1020, 1385], [1039, 1397], [1077, 1397], [1097, 1345], [1115, 1285], [1135, 1275], [1153, 1275], [1171, 1243], [1191, 1250], [1210, 1265], [1229, 1270], [1248, 1235], [1268, 1242], [1286, 1260], [1306, 1270], [1324, 1267], [1345, 1268], [1363, 1282], [1381, 1312]]));
const ma10 = z9([[9, 1438], [112, 1438], [132, 1432], [152, 1428], [172, 1428], [193, 1412], [214, 1405], [234, 1397], [255, 1392], [275, 1386], [335, 1384], [356, 1384], [376, 1375], [397, 1365], [417, 1357], [438, 1357], [458, 1318], [479, 1278], [510, 1255], [540, 1247], [559, 1240], [581, 1205], [601, 1130], [622, 1050], [641, 920], [662, 840], [682, 790], [703, 740], [724, 670], [743, 610], [764, 565], [784, 558], [806, 605], [825, 660], [846, 695], [866, 785], [888, 835], [907, 860], [928, 900], [948, 902], [967, 850], [988, 790], [1008, 715], [1030, 695], [1049, 665], [1070, 625], [1090, 610], [1111, 627], [1131, 627], [1150, 650], [1171, 730], [1191, 840], [1212, 920], [1233, 985], [1253, 1050], [1273, 1103], [1294, 1140], [1314, 1165], [1336, 1200], [1355, 1228], [1374, 1245], [1396, 1258], [1416, 1270], [1437, 1275], [1456, 1285], [1477, 1310], [1498, 1320], [1519, 1327], [1540, 1335], [1560, 1360]]).concat(z10([[9, 1378], [28, 1382], [47, 1384], [86, 1384], [105, 1380], [143, 1372], [163, 1378], [182, 1378], [238, 1378], [258, 1378], [276, 1362], [314, 1328], [334, 1295], [353, 1260], [373, 1242], [392, 1228], [410, 1222], [448, 1225], [468, 1230], [487, 1226], [506, 1250], [525, 1295], [563, 1315], [581, 1330], [601, 1324], [639, 1324], [658, 1340], [678, 1362], [735, 1366], [754, 1378], [773, 1378], [791, 1392], [810, 1398], [830, 1402], [849, 1402], [868, 1392], [887, 1390], [925, 1378], [944, 1365], [982, 1360], [1039, 1357], [1059, 1365], [1077, 1365], [1115, 1334], [1135, 1333], [1153, 1340], [1171, 1320], [1191, 1295], [1210, 1275], [1229, 1268], [1248, 1258], [1268, 1243], [1286, 1255], [1306, 1270], [1345, 1253], [1363, 1268], [1381, 1288]]));
line(vol, ma5, '#d8d8d8', 1.5);
line(vol, ma10, '#e0e000', 1.7);
add(vol, 'line', { x1: 1711, x2: 1711, y1: 771, y2: 1281, stroke: DK, 'stroke-width': 2 });
[35000, 30000, 25000, 20000, 15000, 10000, 5000].forEach(v => {
  add(vol, 'text', { class: 'axlb', x: 1779, y: vy(v) + 7, 'text-anchor': 'end' }, v);
});
for (let v = 2500; v <= 37500; v += 2500) add(vol, 'line', { x1: 1711, x2: v % 5000 ? 1715 : 1719, y1: vy(v), y2: vy(v), stroke: DK, 'stroke-width': 1.5 });
add(vol, 'rect', { x: 1711, y: 837, width: 77, height: 23, fill: '#00008c', stroke: '#c80000', 'stroke-width': 1.5 });
add(vol, 'text', { class: 'boxtxt', x: 1713, y: 854.5 }, '30154');
add(vol, 'rect', { x: 1711, y: 1260, width: 39, height: 21, fill: 'none', stroke: DK, 'stroke-width': 1.5 });
add(vol, 'text', { class: 'x10', x: 1714, y: 1277 }, 'X10');

/* date axis */
add(dates, 'line', { x1: 0, x2: 1787, y1: 1282, y2: 1282, stroke: DK, 'stroke-width': 2.5 });
add(dates, 'line', { x1: 0, x2: 1787, y1: 1305.5, y2: 1305.5, stroke: DK, 'stroke-width': 2 });
for (let x = 71; x < 1700; x += 61.6) add(dates, 'line', { x1: x, x2: x, y1: 1283, y2: 1287, stroke: DK });
add(dates, 'text', { class: 'dt', x: 4, y: 1300 }, '2022年');
[[71.5, '10'], [249, '11'], [496, '12'], [742, '1'], [921, '2'], [1144, '3'], [1401.5, '4'], [1612, '5']].forEach(m => {
  add(dates, 'line', { x1: m[0], x2: m[0], y1: 1283, y2: 1305, stroke: DK, 'stroke-width': 1.5 });
  add(dates, 'text', { class: 'dt', x: m[0] + 2, y: 1300 }, m[1]);
});
add(dates, 'rect', { x: 803, y: 1283, width: 117, height: 22, fill: '#00008c' });
add(dates, 'text', { class: 'dtcur', x: 804, y: 1300 }, '2023/01/11/三');
add(dates, 'line', { x1: 1711, x2: 1711, y1: 1281, y2: 1306, stroke: DK, 'stroke-width': 2 });
add(dates, 'text', { class: 'gl', x: 1730, y: 1300 }, '日线');

/* quote rows */
const sell = document.getElementById('sell'), buy = document.getElementById('buy');
const book = (el, rows) => rows.forEach(r => {
  el.insertAdjacentHTML('beforeend', `<div class="book-row"><b class="l">${r[0]}</b><span class="p">${r[1]}</span><span class="v">${r[2]}<u>万</u></span></div>`);
});
book(sell, [['卖五 ￥', '16.01', '1.6'], ['卖四', '16.00', '12.6'], ['卖三', '15.99', '7.0'], ['卖二', '15.97', '18.8'], ['卖一', '15.95', '6.4']]);
book(buy, [['买一', '15.94', '153.7'], ['买二', '15.93', '82.5'], ['买三', '15.92', '52.4'], ['买四', '15.91', '85.6'], ['买五', '15.90', '234.8']]);
const tr = `14:55 15.93 1.6 S 4;14:55 15.93 3.0 S 2;14:55 15.94 0.2 B 1;14:55 15.94 3.2 B 7;14:55 15.94 1.3 B 6;14:55 15.94 1.6 B 2;14:55 15.93 3.8 S 7;14:55 15.94 1.0 B 2;14:55 15.94 2.1 B 3;14:55 15.93 4.8 S 4;14:56 15.93 13.1 S 9;14:56 15.94 1.3 B 3;14:56 15.94 1.6 B 5;14:56 15.93 2.5 S 2;14:56 15.93 3.2 S 4;14:56 15.94 2.6 - 1;14:56 15.94 2.7 B 1;14:56 15.94 1.4 B 1;14:56 15.93 0.2 S 1;14:56 15.94 6.5 B 4;14:56 15.94 0.8 S 1;14:56 15.95 3.0 B 4;15:00 15.94 59.6 - 58`.split(';');
const tg = document.getElementById('trades');
tr.forEach(l => {
  const p = l.split(' ');
  const f = p[3] === '-' ? '' : p[3];
  tg.insertAdjacentHTML('beforeend', `<div class="tr"><span class="tm">${p[0]}</span><span class="p">${p[1]}</span><span class="v">${p[2]}<u>万</u></span><span class="f ${f.toLowerCase()}">${f}</span><span class="n">${p[4]}</span></div>`);
});
```
